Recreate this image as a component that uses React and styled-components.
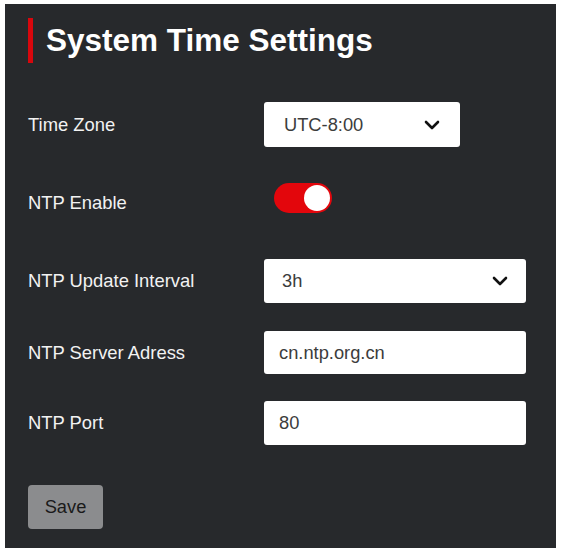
import React, { useState } from 'react';
import styled, { createGlobalStyle } from 'styled-components';

const GlobalStyle = createGlobalStyle`
  html, body {
    margin: 0;
    padding: 0;
    background: #ffffff;
  }
  body {
    font-family: 'Liberation Sans', Arial, sans-serif;
  }
`;

const Page = styled.div`
  padding: 4px 6px 5px 5px;
`;

const Panel = styled.section`
  background-color: #27292c;
  height: 544px;
  box-sizing: border-box;
  padding: 14px 30px 0 23px;
  display: flex;
  flex-direction: column;
`;

const Header = styled.div`
  display: flex;
  align-items: center;
  height: 45px;
  margin-bottom: 39px;
`;

const RedBar = styled.div`
  width: 5px;
  height: 45px;
  background-color: #d8070d;
  margin-right: 13px;
`;

const Title = styled.h1`
  margin: 0;
  color: #ffffff;
  font-size: 31.5px;
  font-weight: 700;
`;

const Row = styled.div`
  display: grid;
  grid-template-columns: 236px 1fr;
  align-items: center;
  height: ${(p) => p.$h || 44}px;
  margin-bottom: ${(p) => p.$mb || 0}px;
`;

const Label = styled.label`
  color: #f2f2f2;
  font-size: 18.4px;
  padding-top: ${(p) => p.$shift || 0}px;
`;

const Field = styled.div`
  width: ${(p) => (p.$short ? '196px' : '262px')};
  height: 100%;
  background: #ffffff;
  border-radius: 3px;
  box-sizing: border-box;
  display: flex;
  align-items: center;
  padding: 0 ${(p) => (p.$short ? '20px' : '18px')};
  justify-content: space-between;
`;

const FieldText = styled.span`
  color: #3c3c3c;
  font-size: 18.3px;
`;

const TextInput = styled.input`
  width: 262px;
  height: 100%;
  box-sizing: border-box;
  border: none;
  outline: none;
  border-radius: 3px;
  background: #ffffff;
  padding: 0 15px;
  font-family: 'Liberation Sans', Arial, sans-serif;
  font-size: 18.3px;
  color: #3c3c3c;
`;

const Switch = styled.button`
  width: 58px;
  height: 30px;
  margin-left: 10px;
  border: none;
  padding: 0;
  border-radius: 15px;
  background-color: ${(p) => (p.$on ? '#e3060c' : '#777')};
  position: relative;
  cursor: pointer;
`;

const Knob = styled.span`
  position: absolute;
  top: 2px;
  left: ${(p) => (p.$on ? '30px' : '2px')};
  width: 26px;
  height: 26px;
  border-radius: 50%;
  background: #ffffff;
`;

const SaveButton = styled.button`
  width: 75px;
  height: 44px;
  border: none;
  border-radius: 4px;
  background-color: #8b8c8e;
  color: #1a1a1a;
  font-family: 'Liberation Sans', Arial, sans-serif;
  font-size: 18.3px;
  cursor: pointer;
`;

const Chevron = () => (
  <svg width="16" height="10" viewBox="0 0 16 10" fill="none">
    <path d="M2 2l6 6 6-6" stroke="#111" strokeWidth="2.6" strokeLinecap="round" strokeLinejoin="round" />
  </svg>
);

const App = () => {
  const [ntpOn, setNtpOn] = useState(true);
  const [server, setServer] = useState('cn.ntp.org.cn');
  const [port, setPort] = useState('80');

  return (
    <Page>
      <GlobalStyle />
      <Panel>
        <Header>
          <RedBar />
          <Title>System Time Settings</Title>
        </Header>

        <Row $h={45} $mb={29}>
          <Label>Time Zone</Label>
          <Field $short>
            <FieldText>UTC-8:00</FieldText>
            <Chevron />
          </Field>
        </Row>

        <Row $h={44} $mb={39}>
          <Label $shift={10}>NTP Enable</Label>
          <Switch $on={ntpOn} onClick={() => setNtpOn(!ntpOn)}>
            <Knob $on={ntpOn} />
          </Switch>
        </Row>

        <Row $h={44} $mb={28}>
          <Label>NTP Update Interval</Label>
          <Field>
            <FieldText>3h</FieldText>
            <Chevron />
          </Field>
        </Row>

        <Row $h={43} $mb={27}>
          <Label>NTP Server Adress</Label>
          <TextInput value={server} onChange={(e) => setServer(e.target.value)} />
        </Row>

        <Row $h={44} $mb={40}>
          <Label>NTP Port</Label>
          <TextInput value={port} onChange={(e) => setPort(e.target.value)} />
        </Row>

        <div>
          <SaveButton>Save</SaveButton>
        </div>
      </Panel>
    </Page>
  );
};

export default App;
